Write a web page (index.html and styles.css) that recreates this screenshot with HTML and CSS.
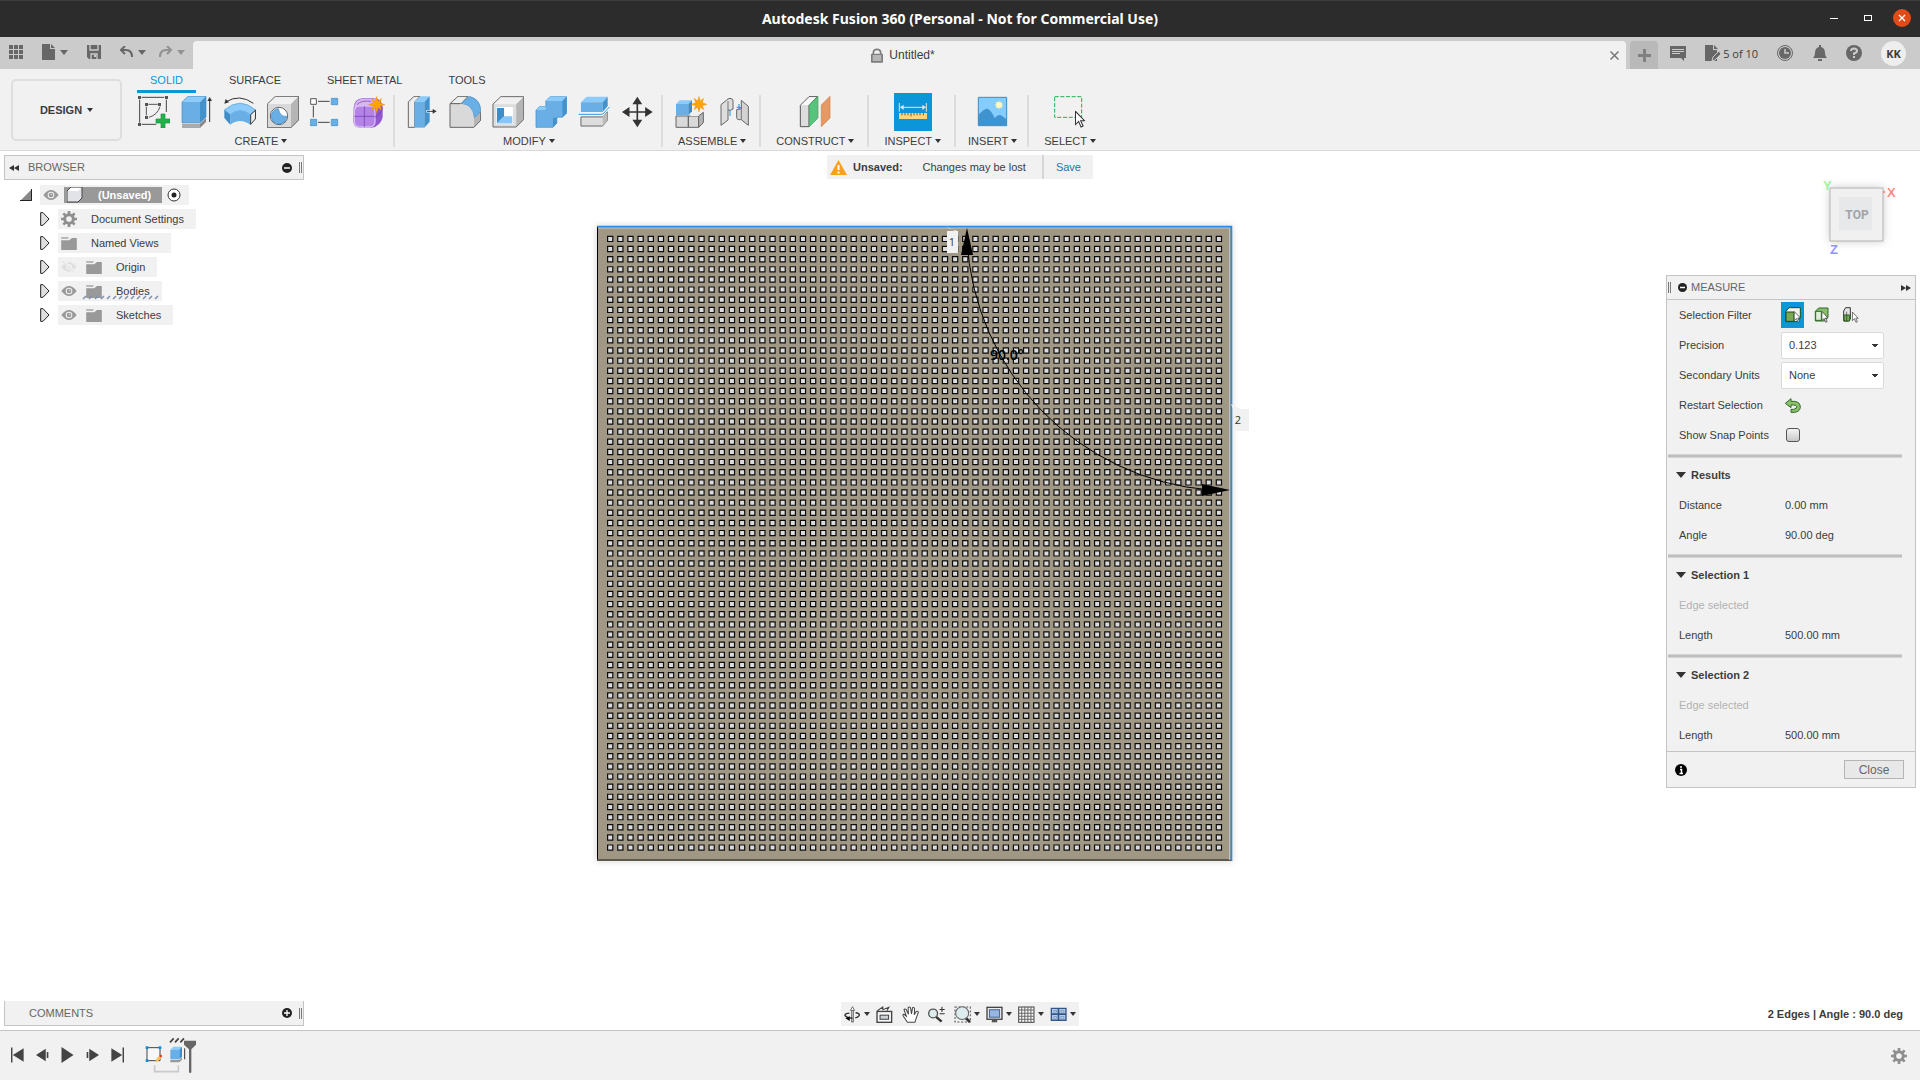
FILE: index.html
```html
<!DOCTYPE html>
<html lang="en">
<head>
  <meta charset="UTF-8">
  <meta name="viewport" content="width=device-width, initial-scale=1.0">
  <title>Autodesk Fusion 360 (Personal - Not for Commercial Use)</title>
  <link rel="stylesheet" href="styles.css">
</head>
<body>

<!-- shared shapes -->
<svg class="defs" aria-hidden="true">
  <defs>
    <symbol id="eye" viewBox="0 0 48 30">
      <path d="M1 15Q24-15 47 15Q24 45 1 15Z" fill="#9a9a9a"/>
      <circle cx="24" cy="15" r="10" fill="#f1f1f1"/>
      <circle cx="24" cy="15" r="7" fill="#9a9a9a"/>
      <circle cx="25" cy="13" r="2" fill="#f1f1f1"/>
    </symbol>
    <symbol id="eye-off" viewBox="0 0 48 36">
      <path d="M1 18Q24-10 47 18Q24 46 1 18Z" fill="#dedede"/>
      <circle cx="24" cy="18" r="9" fill="#f1f1f1"/>
      <circle cx="24" cy="18" r="6" fill="#dedede"/>
      <path d="M5 0L45 36" stroke="#f1f1f1" stroke-width="9"/>
      <path d="M5 2L43 36" stroke="#dedede" stroke-width="3"/>
    </symbol>
    <symbol id="folder" viewBox="0 0 48 40">
      <path d="M0 10H25L33 3H48V40H0Z" fill="#999"/>
      <path d="M0 3H22" stroke="#999" stroke-width="4"/>
    </symbol>
    <symbol id="gear" viewBox="0 0 48 48">
      <path d="M24 0V48M0 24H48M7 7L41 41M41 7L7 41" stroke="#8f8f8f" stroke-width="8"/>
      <circle cx="24" cy="24" r="13" fill="#f1f1f1" stroke="#8f8f8f" stroke-width="9"/>
    </symbol>
    <symbol id="twist" viewBox="0 0 30 42">
      <path d="M2 2H9L27 21L9 40H2Z" fill="#dfdfdf" stroke="#222" stroke-width="3"/>
    </symbol>
    <symbol id="cursor" viewBox="0 0 30 50">
      <path d="M2 2V40L11 31L18 47L24 44L17 29H28Z" fill="#fff" stroke="#333" stroke-width="3"/>
    </symbol>
    <symbol id="star" viewBox="0 0 48 48">
      <path d="M24 0L28 14L38 6L34 19L48 24L34 28L39 40L28 33L24 48L20 33L9 40L14 28L0 24L14 19L9 6L20 14Z" fill="#ffa400" stroke="#de8400"/>
    </symbol>
  </defs>
</svg>

<header class="titlebar">
  <h1>Autodesk Fusion 360 (Personal - Not for Commercial Use)</h1>
  <div class="window-buttons">
    <button aria-label="Minimize"><svg width="8" height="8"><path d="M0 4.500H8" stroke="#fff"/></svg></button>
    <button aria-label="Maximize"><svg width="8" height="8"><rect x=".5" y="1.500" width="7" height="5" fill="none" stroke="#fff"/></svg></button>
    <button class="win-close" aria-label="Close window"><svg width="8" height="8"><path d="M1 1L7 7M7 1L1 7" stroke="#fff" stroke-width="1.300"/></svg></button>
  </div>
</header>

<div class="tabbar">
  <div class="quick">
    <button aria-label="Data panel"><svg width="14" height="14" fill="#676767"><path d="M0 0h4v4H0zM5 0h4v4H5zM10 0h4v4h-4zM0 5h4v4H0zM5 5h4v4H5zM10 5h4v4h-4zM0 10h4v4H0zM5 10h4v4H5zM10 10h4v4h-4z"/></svg></button>
    <button class="caret" aria-label="File"><svg width="13" height="16" fill="#676767"><path d="M0 0H8V5H13V16H0ZM9 0L13 4H9Z"/></svg></button>
    <button aria-label="Save"><svg width="14" height="14"><path d="M0 0H14V14H2L0 12Z" fill="#676767"/><path d="M3 0V5H11V0M4 14V9H10V14" fill="none" stroke="#cbcbcb" stroke-width="1.300"/><path d="M8 10V12" stroke="#cbcbcb" stroke-width="2"/></svg></button>
    <div class="history">
      <button class="caret" aria-label="Undo"><svg width="13" height="12"><path d="M5 0L1 4L5 8M1 4H6Q12 4 12 11" fill="none" stroke="#676767" stroke-width="2"/></svg></button>
      <button class="caret dim" aria-label="Redo"><svg width="13" height="12"><path d="M8 0L12 4L8 8M12 4H7Q1 4 1 11" fill="none" stroke="#929292" stroke-width="2"/></svg></button>
    </div>
  </div>
  <div class="doc-tab">
    <span class="doc-name">
      <svg width="12" height="15" viewBox="0 0 36 43"><path d="M7 18V12Q8 3 18 3T29 12V18" fill="none" stroke="#7d7d7d" stroke-width="5"/><rect y="16" width="36" height="27" rx="2" fill="#7d7d7d"/><path d="M5 23H31M5 29H31M5 35H31" stroke="#f1f1f1" stroke-width="3"/></svg>
      Untitled*
    </span>
    <button aria-label="Close tab"><svg width="9" height="9"><path d="M.5 .5L8.500 8.500M8.500 .5L.5 8.500" stroke="#777" stroke-width="1.500"/></svg></button>
  </div>
  <button class="new-tab" aria-label="New tab"><svg width="13" height="13"><path d="M6.500 0V13M0 6.500H13" stroke="#808080" stroke-width="3"/></svg></button>
  <div class="account">
    <button aria-label="Comments"><svg width="16" height="16"><path d="M0 1H16V13H14V16L11 13H0Z" fill="#676767"/><path d="M2 4.500H14M2 6.500H14M2 8.500H10" stroke="#cbcbcb"/></svg></button>
    <button class="docs"><svg width="16" height="16"><path d="M0 0H8V5H12V16H0ZM9 0L13 4H9Z" fill="#676767"/><path d="M7 16L8 12L14 6L16 9L10 15Z" fill="#676767" stroke="#cbcbcb"/></svg>5 of 10</button>
    <button aria-label="Job status"><svg width="16" height="16"><circle cx="8" cy="8" r="7.500" fill="none" stroke="#676767"/><circle cx="8" cy="8" r="6" fill="#676767"/><path d="M8 4V8H12" fill="none" stroke="#cbcbcb" stroke-width="1.500"/></svg></button>
    <button aria-label="Notifications"><svg width="14" height="16" fill="#676767"><path d="M6 2V0H8V2Q12 3 12 8Q12 11 14 13H0Q2 11 2 8Q2 3 6 2ZM5 14H9V16H5Z"/></svg></button>
    <button aria-label="Help"><svg width="16" height="16"><circle cx="8" cy="8" r="8" fill="#676767"/><path d="M5 6Q5 3.500 8 3.500T11 6Q11 7.500 8 8.500V10" fill="none" stroke="#cbcbcb" stroke-width="2"/><path d="M7 11H9V13H7Z" fill="#cbcbcb"/></svg></button>
    <button class="avatar">KK</button>
  </div>
</div>

<section class="ribbon">
  <button class="workspace caret">DESIGN</button>
  <div class="ribbon-main">
    <nav class="ribbon-tabs">
      <a class="active" href="#solid">SOLID</a>
      <a href="#surface">SURFACE</a>
      <a href="#sheet">SHEET METAL</a>
      <a href="#tools">TOOLS</a>
    </nav>
    <div class="groups">
      <div class="group">
        <div class="tools">
          <button aria-label="Create sketch"><svg viewBox="411 198 96 96"><path d="M422 202H490M416 209V278M422 283H466M496 209V246" fill="none" stroke="#444" stroke-width="3"/><path d="M436 230V256M442 223H470M477 230Q470 254 444 262" fill="none" stroke="#555" stroke-width="3"/><path d="M411 198h9v9h-9zM492 198h9v9h-9zM411 279h9v9h-9zM432 219h9v9h-9zM471 219h9v9h-9zM432 258h9v9h-9z" fill="#555"/><path d="M480 252H492V267H507V279H492V294H480V279H465V267H480Z" fill="#22b24c" stroke="#12933a" stroke-width="2"/></svg></button>
          <button aria-label="Extrude"><svg viewBox="540 198 96 96"><path d="M543 281H597V294H543Z" fill="#aaa"/><path d="M597 281L615 264V276L597 294Z" fill="#888"/><path d="M543 216L561 199H615L597 216Z" fill="#8ccbfa"/><path d="M543 216H597V278H543Z" fill="#69afe5"/><path d="M597 216L615 199V261L597 278Z" fill="#4492cc"/><path d="M543 278V216L561 199H615V261L597 278Z" fill="none" stroke="#3d8bc5" stroke-width="2"/><path d="M626 276V210" stroke="#333" stroke-width="3"/><path d="M619 213L626 201L633 213Z" fill="#333"/></svg></button>
          <button aria-label="Revolve"><svg viewBox="669 198 96 96"><path d="M674 216Q716 190 757 220" fill="none" stroke="#333" stroke-width="3"/><path d="M670 221L674 207L684 217Z" fill="#333"/><path d="M670 240Q717 199 764 240L748 254Q716 230 688 254Z" fill="#8ccbfa" stroke="#4e9bd6" stroke-width="2"/><path d="M688 254Q716 230 748 254V284Q716 262 688 284Z" fill="#69afe5"/><path d="M670 240L688 254V284L670 264Z" fill="#3f8dc8"/><path d="M764 240L749 254V283L763 267Z" fill="#eee" stroke="#333" stroke-width="3"/></svg></button>
          <button aria-label="Hole"><svg viewBox="798 198 96 96"><path d="M799 222L823 199H893L870 222Z" fill="#f0f0f0"/><path d="M799 222H870V293H799Z" fill="#d9d9d9"/><path d="M870 222L893 199V270L870 293Z" fill="#b5b5b5"/><path d="M799 222L823 199H893V270L870 293H799Z" fill="none" stroke="#666" stroke-width="3"/><circle cx="834" cy="258" r="26" fill="#fff" stroke="#666" stroke-width="3"/><path d="M832 236A23 23 0 1 0 857 259Q837 261 832 236Z" fill="#69afe5" stroke="#3d8bc5" stroke-width="2"/></svg></button>
          <button aria-label="Pattern"><svg viewBox="927 198 96 96"><path d="M951 214H986M937 227V262M951 277H986" stroke="#444" stroke-width="3"/><path d="M929 206h17v17h-17z" fill="#fff" stroke="#555" stroke-width="3"/><path d="M991 205h19v19h-19zM928 268h19v19h-19zM991 268h19v19h-19z" fill="#69afe5" stroke="#3d8bc5" stroke-width="2"/></svg></button>
          <button aria-label="Create form"><svg viewBox="1056 198 96 96"><path d="M1058 232Q1060 206 1085 205H1120Q1146 208 1145 235V262Q1138 290 1112 293H1076Q1056 292 1057 270Z" fill="#9258cf"/><path d="M1060 229Q1064 207 1088 206H1128L1118 228Q1080 224 1060 240Z" fill="#d7b6f3"/><rect x="1060" y="228" width="62" height="63" rx="15" fill="#b384e6" stroke="#d8bdf3" stroke-width="4"/><path d="M1060 259H1122M1090 228V291M1122 262Q1140 252 1145 232M1068 224Q1080 210 1110 214" fill="none" stroke="#6d35a8" stroke-width="2"/><use href="#star" x="1102" y="199" width="50" height="50"/></svg></button>
        </div>
        <button class="group-label caret">CREATE</button>
      </div>
      <div class="group">
        <div class="tools">
          <button aria-label="Press pull"><svg viewBox="46 78 96 96"><path d="M53 96L70 79H88L72 96V172H53Z" fill="#eee" stroke="#666" stroke-width="3"/><path d="M71 96L89 79H117L101 96Z" fill="#8ccbfa"/><path d="M71 96H101V173H71Z" fill="#69afe5"/><path d="M101 96L117 79V155L101 173Z" fill="#4492cc"/><path d="M107 124H128" stroke="#fff" stroke-width="7"/><path d="M109 124H128" stroke="#333" stroke-width="3"/><path d="M126 117L138 124L126 131Z" fill="#333"/></svg></button>
          <button aria-label="Fillet"><svg viewBox="175 78 96 96"><path d="M178 101L202 79H232L212 101Z" fill="#eee" stroke="#666" stroke-width="3"/><path d="M178 101H212Q249 106 250 146V172H178Z" fill="#d9d9d9"/><path d="M250 145L271 123V151L250 172Z" fill="#b5b5b5"/><path d="M212 100L236 79Q271 88 270 125L251 143Q248 104 212 100Z" fill="#69afe5" stroke="#3d8bc5" stroke-width="2"/><path d="M178 101V172H250L270 151V127M178 101H209" fill="none" stroke="#666" stroke-width="3"/></svg></button>
          <button aria-label="Shell"><svg viewBox="304 78 98 96"><path d="M307 102L331 79H401L378 102Z" fill="#f0f0f0"/><path d="M307 102H378V172H307Z" fill="#ddd"/><path d="M378 102L401 79V149L378 172Z" fill="#b5b5b5"/><path d="M307 102L331 79H401V149L378 172H307Z" fill="none" stroke="#666" stroke-width="3"/><path d="M316 111H368V163H316Z" fill="#fff"/><path d="M319 114H341V139L319 161Z" fill="#3f8dc8"/><path d="M341 139H366V161H319Z" fill="#86c6f8"/></svg></button>
          <button aria-label="Combine"><svg viewBox="433 78 98 96"><path d="M436 120L447 109H466V92L479 79H530V129L517 142H500V160L488 173H436Z" fill="#69afe5" stroke="#3d8bc5" stroke-width="2"/><path d="M466 92L479 79H530L517 92ZM436 120L447 109H466V120Z" fill="#8ccbfa"/><path d="M517 92L530 79V129L517 142ZM488 145L500 142V160L488 173Z" fill="#4492cc"/></svg></button>
          <button aria-label="Split body"><svg viewBox="562 78 98 96"><path d="M571 96L588 79H653L638 96Z" fill="#8ccbfa"/><path d="M571 96H638V126H571Z" fill="#69afe5"/><path d="M638 96L653 79V108L638 126Z" fill="#4492cc"/><path d="M571 141H638L652 125V152L637 169H571Z" fill="#ddd" stroke="#666" stroke-width="3"/><path d="M638 141L652 125V152L638 168Z" fill="#bbb"/><path d="M564 133H637L659 110" fill="none" stroke="#fff" stroke-width="8"/><path d="M564 133H637L659 110" fill="none" stroke="#118ddd" stroke-width="3"/></svg></button>
          <button aria-label="Move"><svg viewBox="691 78 98 96"><path d="M741 98V154M713 126H769" stroke="#333" stroke-width="5"/><path d="M726 102L741 79L756 102ZM726 150L741 173L756 150ZM717 111L694 126L717 141ZM765 111L788 126L765 141Z" fill="#333"/></svg></button>
        </div>
        <button class="group-label caret">MODIFY</button>
      </div>
      <div class="group">
        <div class="tools">
          <button aria-label="New component"><svg viewBox="853 78 96 96"><path d="M856 138H893V172H856Z M893 138H924V172H893Z" fill="#d9d9d9" stroke="#666" stroke-width="3"/><path d="M898 138L910 127H938L924 138Z" fill="#f0f0f0"/><path d="M924 138L938 127V158L924 172Z" fill="#b5b5b5" stroke="#666" stroke-width="3"/><path d="M856 102L867 91H905L893 102Z" fill="#8ccbfa"/><path d="M856 102H893V136H856Z" fill="#69afe5"/><path d="M893 102L904 91V124L893 136Z" fill="#3f8dc8"/><use href="#star" x="901" y="79" width="48" height="48"/></svg></button>
          <button aria-label="Joint"><svg viewBox="982 78 96 96"><path d="M991 104L1007 91Q1012 85 1018 85Q1027 86 1027 92V117Q1021 123 1012 120V150L991 166Z" fill="#ddd" stroke="#666" stroke-width="3"/><path d="M1052 91L1073 109V166L1052 149Q1038 150 1038 143V119L1052 116Z" fill="#d3d3d3" stroke="#666" stroke-width="3"/><path d="M1012 93V120M1052 116V149" stroke="#777" stroke-width="3"/><path d="M1018 121V138M1045 102V118M1038 112H1051" stroke="#1591e5" stroke-width="3"/></svg></button>
        </div>
        <button class="group-label caret">ASSEMBLE</button>
      </div>
      <div class="group">
        <div class="tools">
          <button aria-label="Offset plane"><svg viewBox="60 288 96 96"><path d="M64 316L90 290H115L90 316V380H64Z" fill="#ddd" stroke="#555" stroke-width="3"/><path d="M67 315L91 292H111L89 315Z" fill="#fafafa"/><path d="M91 315L117 289V354L91 380Z" fill="#56c47a" stroke="#3aa660" stroke-width="2"/><path d="M127 315L153 289V354L127 380Z" fill="#e59a66" stroke="#cd7f48" stroke-width="2"/></svg></button>
        </div>
        <button class="group-label caret">CONSTRUCT</button>
      </div>
      <div class="group">
        <div class="tools">
          <button class="on" aria-label="Measure"><svg viewBox="351 288 96 96"><path d="M358 309V335M439 309V335M364 322H434" stroke="#e4e4e4" stroke-width="3"/><path d="M360 322L371 314V330ZM438 322L427 314V330Z" fill="#e4e4e4"/><path d="M357 339H441V357H357Z" fill="#ffd57c"/><path d="M366 339V346M375 339V346M384 339V346M393 339V349M402 339V346M411 339V346M420 339V346M430 339V346" stroke="#6b5a33" stroke-width="3"/></svg></button>
        </div>
        <button class="group-label caret">INSPECT</button>
      </div>
      <div class="group slim">
        <div class="tools">
          <button aria-label="Insert image"><svg viewBox="588 288 96 96"><path d="M592 292H677V377H592Z" fill="#85ccff" stroke="#3d8bc5" stroke-width="3"/><path d="M592 346Q608 325 619 326Q631 330 641 355Q653 342 660 346L677 358V377H592Z" fill="#3f93cf"/><circle cx="654" cy="315" r="10" fill="#fffbc9" stroke="#e3dfa0" stroke-width="2"/></svg></button>
        </div>
        <button class="group-label caret">INSERT</button>
      </div>
      <div class="group">
        <div class="tools">
          <button aria-label="Select"><svg viewBox="816 288 96 96"><path d="M818 290H899V352H818Z" fill="none" stroke="#20b050" stroke-width="3" stroke-dasharray="12 5"/><use href="#cursor" x="878" y="332" width="32" height="52"/></svg></button>
        </div>
        <button class="group-label caret">SELECT</button>
      </div>
    </div>
  </div>
</section>

<main class="canvas">
  <svg class="plate" viewBox="590 215 670 660" width="670" height="660">
    <defs>
      <filter id="shade" x="-5%" y="-5%" width="110%" height="110%"><feGaussianBlur stdDeviation="3"/></filter>
    </defs>
    <rect x="596" y="225" width="637" height="637" fill="#ddd" filter="url(#shade)"/>
    <rect x="597" y="226" width="635" height="635" fill="#a09885"/>
    <path id="holes" fill="#dcdcde" stroke="#0c0c0c" stroke-width="1.200"/>
    <path d="M597.500 227V860" stroke="#000"/>
    <path d="M597 860H1231" stroke="#5e584d" stroke-width="2"/>
    <path d="M598 228H1229.500V860" fill="none" stroke="#c3c0b7" stroke-width="1"/>
    <path d="M597 226.500H1231.500V861" fill="none" stroke="#2a89ec" stroke-width="1.600"/>
    <path d="M967 240A265 265 0 0 0 1210 490" fill="none" stroke="#000"/>
    <path d="M967 228L961 255H973ZM1230 490L1202 484V496Z"/>
    <path d="M945 226L955 231H947V253H958V231L950 229Z" fill="#f1f1f1"/>
    <path d="M1231 404L1241 409H1249V431H1233V409Z" fill="#f1f1f1"/>
    <text class="tag" x="952" y="246">1</text>
    <text class="tag" x="1238" y="424">2</text>
    <text class="angle" x="990" y="360">90.0°</text>
  </svg>

  <aside class="browser">
    <div class="dock-head">
      <svg width="10" height="6"><path d="M5 0V6L0 3ZM10 0V6L5 3Z" fill="#333"/></svg>
      <h2>BROWSER</h2>
      <button aria-label="Collapse"><svg width="10" height="10"><circle cx="5" cy="5" r="5" fill="#222"/><path d="M2 5H8" stroke="#fff" stroke-width="1.500"/></svg></button>
      <i class="grip"></i>
    </div>
    <ul class="tree">
      <li class="root">
        <svg class="twist" width="12" height="12"><path d="M12 0V12H0Z" fill="#888"/><path d="M11.500 0V11.500H0" fill="none" stroke="#222"/></svg>
        <div class="node">
          <svg width="16" height="10"><use href="#eye"/></svg>
          <span class="root-name"><svg width="16" height="16"><path d="M0 4L4 0H15V11L11 15H0Z" fill="#e1e3e8" stroke="#444"/><path d="M1 4L4 1H14L11 4Z" fill="#fff"/></svg>(Unsaved)</span>
          <svg width="14" height="14"><circle cx="7" cy="7" r="6" fill="#fff" stroke="#333"/><circle cx="7" cy="7" r="2.500" fill="#222"/></svg>
        </div>
      </li>
      <li><svg class="twist" width="10" height="14"><use href="#twist"/></svg><div class="node"><svg width="16" height="16"><use href="#gear"/></svg>Document Settings</div></li>
      <li><svg class="twist" width="10" height="14"><use href="#twist"/></svg><div class="node"><svg width="16" height="13"><use href="#folder"/></svg>Named Views</div></li>
      <li class="sub"><svg class="twist" width="10" height="14"><use href="#twist"/></svg><div class="node"><svg width="16" height="12"><use href="#eye-off"/></svg><svg width="16" height="13"><use href="#folder"/></svg>Origin</div></li>
      <li class="sub"><svg class="twist" width="10" height="14"><use href="#twist"/></svg><div class="node"><svg width="16" height="10"><use href="#eye"/></svg><svg width="16" height="13"><use href="#folder"/></svg>Bodies<svg class="hatch" width="78" height="5"><path d="M1 4L4 1M7 4L10 1M13 4L16 1M19 4L22 1M25 4L28 1M31 4L34 1M37 4L40 1M43 4L46 1M49 4L52 1M55 4L58 1M61 4L64 1M67 4L70 1M73 4L76 1" stroke="#7d8fb0" stroke-width="1.500"/></svg></div></li>
      <li class="sub"><svg class="twist" width="10" height="14"><use href="#twist"/></svg><div class="node"><svg width="16" height="10"><use href="#eye"/></svg><svg width="16" height="13"><use href="#folder"/></svg>Sketches</div></li>
    </ul>
  </aside>

  <div class="notice">
    <svg width="17" height="15"><path d="M8.500 0L17 15H0Z" fill="#fb9f1c"/><path d="M8.500 5V10M8.500 11.500V13.500" stroke="#fff" stroke-width="2"/></svg>
    <strong>Unsaved:</strong>
    <span>Changes may be lost</span>
    <a href="#save">Save</a>
  </div>

  <svg class="viewcube" width="84" height="84">
    <rect x="14" y="11" width="53" height="53" class="cube-face"/>
    <rect x="23" y="20" width="33" height="33" fill="#e6e8ea"/>
    <text x="41" y="42" class="cube-text">TOP</text>
    <text x="7" y="13" class="axis" fill="#9bf59b">Y</text>
    <text x="71" y="20" class="axis" fill="#ff8a8a">X</text>
    <text x="14" y="77" class="axis" fill="#9494ff">Z</text>
    <path d="M67 15H69" stroke="#ff8a8a" stroke-width="2"/>
  </svg>

  <aside class="measure">
    <div class="dock-head">
      <i class="grip"></i>
      <svg width="9" height="9"><circle cx="4.500" cy="4.500" r="4.500" fill="#222"/><path d="M2 4.500H7" stroke="#fff" stroke-width="1.500"/></svg>
      <h2>MEASURE</h2>
      <svg width="10" height="6"><path d="M0 0V6L5 3ZM5 0V6L10 3Z" fill="#333"/></svg>
    </div>
    <div class="row">
      <span>Selection Filter</span>
      <div class="filters">
        <button class="on" aria-label="Select face/edge/vertex"><svg width="16" height="16" viewBox="0 0 48 48"><path d="M2 14L12 2H46V32L36 44H2Z" fill="#eef3ee" stroke="#1e4f1e" stroke-width="3"/><path d="M3 15H27V43H3Z" fill="#78a957" stroke="#1e4f1e" stroke-width="3"/><use href="#cursor" x="26" y="12" width="22" height="36"/></svg></button>
        <button aria-label="Select body"><svg width="16" height="16" viewBox="0 0 48 48"><path d="M4 13L14 3H42V30L32 42H4Z" fill="#8bbd6f" stroke="#2b6b25" stroke-width="3"/><path d="M5 13H22V40H5Z" fill="#dfeed6" stroke="#2b6b25" stroke-width="3"/><use href="#cursor" x="22" y="12" width="22" height="36"/></svg></button>
        <button aria-label="Select component"><svg width="16" height="16" viewBox="0 0 48 48"><path d="M2 12L8 2H22V36L17 42H2Z" fill="#e5e5e5" stroke="#333" stroke-width="3"/><path d="M3 24H20V42H3Z" fill="#78a957" stroke="#2b5f25" stroke-width="3"/><path d="M11 14V42" stroke="#333" stroke-width="2"/><use href="#cursor" x="26" y="14" width="22" height="34"/></svg></button>
      </div>
    </div>
    <div class="row"><label for="precision">Precision</label><select id="precision"><option>0.123</option></select></div>
    <div class="row"><label for="units">Secondary Units</label><select id="units"><option>None</option></select></div>
    <div class="row"><span>Restart Selection</span><button class="restart" aria-label="Restart selection"><svg width="16" height="15" viewBox="0 0 48 45"><path d="M1 16L18 2V10H28Q46 12 46 28Q44 42 28 43H18V34H26Q36 32 35 26Q33 21 26 21H18V29Z" fill="#8cbf6b" stroke="#2b6b25" stroke-width="3"/></svg></button></div>
    <div class="row"><label for="snap">Show Snap Points</label><input type="checkbox" id="snap"></div>
    <hr>
    <h3>Results</h3>
    <div class="row"><span>Distance</span><span class="value">0.00 mm</span></div>
    <div class="row"><span>Angle</span><span class="value">90.00 deg</span></div>
    <hr>
    <h3>Selection 1</h3>
    <div class="row muted"><span>Edge selected</span></div>
    <div class="row"><span>Length</span><span class="value">500.00 mm</span></div>
    <hr>
    <h3>Selection 2</h3>
    <div class="row muted"><span>Edge selected</span></div>
    <div class="row"><span>Length</span><span class="value">500.00 mm</span></div>
    <div class="measure-foot">
      <svg width="12" height="12"><circle cx="6" cy="6" r="6"/><path d="M5 5.500H6.500V9M4.500 9.500H8M6 2V4" fill="none" stroke="#fff" stroke-width="1.500"/></svg>
      <button>Close</button>
    </div>
  </aside>

  <div class="comments dock-head">
    <h2>COMMENTS</h2>
    <button aria-label="Expand"><svg width="10" height="10"><circle cx="5" cy="5" r="5" fill="#222"/><path d="M2 5H8M5 2V8" stroke="#fff" stroke-width="1.300"/></svg></button>
    <i class="grip"></i>
  </div>

  <div class="navbar">
    <button class="caret" aria-label="Orbit"><svg viewBox="72 46 50 50"><path d="M97 94V58" stroke="#222" stroke-width="6"/><path d="M97 92V56" stroke="#fff" stroke-width="2"/><path d="M91 59L97 48L103 59Z" fill="#fff" stroke="#333" stroke-width="2"/><path d="M88 67Q74 68 75 74Q80 81 97 82M106 66Q118 67 117 73Q114 80 105 81" fill="none" stroke="#333" stroke-width="4"/><path d="M76 82L89 76V90Z"/></svg></button>
    <button aria-label="Look at"><svg viewBox="170 46 50 50"><path d="M174 60L190 49V57L208 50L202 60" fill="#fff" stroke="#444" stroke-width="3"/><rect x="173" y="62" width="43" height="32" fill="#f7f7f7" stroke="#444" stroke-width="4"/><rect x="182" y="73" width="25" height="12" fill="#cdd2d8" stroke="#444" stroke-width="3"/></svg></button>
    <button aria-label="Pan"><svg viewBox="248 46 50 50"><path d="M264 94L252 76Q249 71 253 70L261 76L254 57Q255 53 260 56L267 70L266 51Q270 47 273 51L276 69L279 51Q284 49 285 54L284 72L290 62Q296 60 296 65L289 84L286 94Z" fill="#fff" stroke="#444" stroke-width="3"/></svg></button>
    <button aria-label="Zoom"><svg viewBox="326 46 50 50"><path d="M349 77L366 92" stroke="#333" stroke-width="7"/><circle cx="341" cy="68" r="13" fill="#dcecee" stroke="#555" stroke-width="4"/><path d="M360 56H375M367 48V64M360 69H375" stroke="#333" stroke-width="3"/></svg></button>
    <button class="caret" aria-label="Zoom window"><svg viewBox="403 46 50 50"><path d="M406 49H451V93H406Z" fill="none" stroke="#555" stroke-width="3" stroke-dasharray="6 5"/><path d="M436 80L450 93" stroke="#333" stroke-width="8"/><circle cx="427" cy="67" r="19" fill="#dcecee" stroke="#666" stroke-width="3"/></svg></button>
    <button class="caret" aria-label="Display settings"><svg viewBox="503 46 50 50"><rect x="506" y="50" width="44" height="35" fill="#f5f5f5" stroke="#444" stroke-width="4"/><rect x="513" y="57" width="30" height="22" fill="#98b7e0" stroke="#42618f" stroke-width="3"/><path d="M520 87H536V94H520Z" fill="#555"/></svg></button>
    <button class="caret" aria-label="Grid and snaps"><svg viewBox="596 46 50 50"><rect x="598" y="49" width="45" height="45" fill="#fbfbfb" stroke="#444" stroke-width="3"/><path d="M607 49V94M616 49V94M625 49V94M634 49V94M598 58H643M598 67H643M598 76H643M598 85H643" stroke="#666" stroke-width="3"/></svg></button>
    <button class="caret" aria-label="Viewports"><svg viewBox="688 46 50 50"><path d="M692 53H735V88H692Z" fill="#b8cce8" stroke="#34578a" stroke-width="4"/><path d="M713 53V88M692 70H735" stroke="#34578a" stroke-width="5"/><path d="M699 59H707V64H699ZM720 59H729V64H720ZM699 77H707V82H699ZM720 77H729V82H720Z" fill="#dbe6f5" stroke="#6485b3" stroke-width="2"/></svg></button>
  </div>

  <p class="status">2 Edges | Angle : 90.0 deg</p>
</main>

<footer class="timeline">
  <div class="player">
    <button aria-label="Go to start"><svg viewBox="0 0 36 42"><path d="M0 0H4V42H0ZM35 2V40L5 21Z"/></svg></button>
    <button aria-label="Step back"><svg viewBox="0 0 40 42"><path d="M30 2V40L0 21ZM33 12H38V30H33Z"/></svg></button>
    <button aria-label="Play"><svg viewBox="0 0 36 48"><path d="M0 0V48L36 24Z"/></svg></button>
    <button aria-label="Step forward"><svg viewBox="0 0 40 42"><path d="M10 2V40L40 21ZM2 12H7V30H2Z"/></svg></button>
    <button aria-label="Go to end"><svg viewBox="0 0 36 42"><path d="M32 0H36V42H32ZM1 2V40L31 21Z"/></svg></button>
  </div>
  <svg class="features" width="54" height="38" viewBox="435 136 162 114">
    <path d="M441 171H480V210H441Z" fill="#f7f7f7" stroke="#444" stroke-width="3"/>
    <path d="M437 167h8v8h-8zM476 167h8v8h-8zM437 206h8v8h-8z" fill="#118ddd"/>
    <path d="M466 214L469 204L480 194L486 200L475 211Z" fill="#f8c04e"/>
    <circle cx="482" cy="196" r="4" fill="#e33"/>
    <path d="M464 224V243H535V224" fill="none" stroke="#c9c9c9" stroke-width="5"/>
    <path d="M511 208H538L546 200V207L538 215H511Z" fill="#999"/>
    <path d="M511 177L520 168H546L538 177Z" fill="#8ccbfa"/>
    <path d="M511 177H538V206H511Z" fill="#69afe5"/>
    <path d="M538 177L546 168V198L538 206Z" fill="#3f8dc8"/>
    <path d="M554 206V173" stroke="#333" stroke-width="3"/>
    <path d="M510 155L521 143M525 155L536 143M541 155L552 143" stroke="#444" stroke-width="5"/>
    <path d="M552 150H588V162L574 176V246H567V176L552 162Z" fill="#666"/>
  </svg>
  <button class="settings" aria-label="Settings"><svg width="16" height="16"><use href="#gear"/></svg></button>
</footer>

<script>
  // 61 x 61 square holes in the plate
  const count = 61;
  const pitch = 10.145;
  const size = 5.2;
  let d = '';

  for (let row = 0; row < count; row++) {
    for (let col = 0; col < count; col++) {
      const x = (610.2 + col * pitch - size / 2).toFixed(2);
      const y = (238.9 + row * pitch - size / 2).toFixed(2);
      d += `M${x} ${y}h${size}v${size}h-${size}z`;
    }
  }

  document.getElementById('holes').setAttribute('d', d);
</script>

</body>
</html>
```
FILE: styles.css
```css
* { box-sizing: border-box; }

body {
  font-family: "Liberation Sans", Arial, sans-serif;
  font-size: 11px;
  color: #3c3c3c;
  background: #fff;
  margin: 0;
  min-height: 100vh;
  display: flex;
  flex-direction: column;
}

h1, h2, h3, p, ul { margin: 0; padding: 0; }

button {
  font: inherit;
  color: inherit;
  background: none;
  border: none;
  padding: 0;
  display: flex;
  align-items: center;
  justify-content: center;
}

svg { flex-shrink: 0; display: block; }

a { text-decoration: none; color: inherit; }

.defs { position: absolute; width: 0; height: 0; }

.caret::after {
  content: "";
  border: 3px solid transparent;
  border-top: 4px solid #333;
  border-bottom: 0;
  margin-left: 3px;
}

/* title bar */
.titlebar {
  height: 37px;
  padding-bottom: 2px;
  background: #2c2c2c;
  border-top: 1px solid #3c3c3c;
  display: grid;
  grid-template-columns: 1fr auto 1fr;
  align-items: center;
}

.titlebar h1 {
  grid-column: 2;
  color: #fff;
  font-family: "Noto Sans", "Open Sans", sans-serif;
  font-size: 14px;
  font-weight: 700;
}

.window-buttons {
  display: flex;
  justify-content: flex-end;
  align-items: center;
  gap: 26px;
  padding-right: 9px;
}

.win-close {
  width: 18px;
  height: 18px;
  margin-left: -5px;
  border-radius: 50%;
  background: #e04b17;
}

/* document tabs */
.tabbar {
  height: 32px;
  background: #cbcbcb;
  display: flex;
  align-items: flex-end;
}

.quick {
  width: 193px;
  height: 32px;
  padding: 0 0 2px 9px;
  display: flex;
  align-items: center;
  gap: 19px;
}

.history { display: flex; gap: 13px; }

.quick .caret::after {
  border-width: 5px 4px 0;
  border-top-color: #676767;
  margin-left: 5px;
}

.quick .dim::after { border-top-color: #929292; }

.doc-tab {
  flex: 1;
  height: 28px;
  background: #f1f1f1;
  border-radius: 4px 4px 0 0;
  display: grid;
  grid-template-columns: 1fr auto 1fr;
  align-items: center;
  padding-right: 7px;
}

.doc-name {
  grid-column: 2;
  display: flex;
  align-items: center;
  gap: 6px;
  padding-right: 6px;
  font-size: 12px;
}

.doc-tab button { justify-self: end; }

.new-tab {
  width: 28px;
  height: 28px;
  margin-left: 4px;
  background: #b9b9b9;
  border-radius: 4px 4px 0 0;
}

.account {
  width: 262px;
  height: 32px;
  padding: 0 14px 0 12px;
  display: flex;
  align-items: center;
  justify-content: space-between;
  font-family: "Open Sans", "Noto Sans", sans-serif;
}

.docs { gap: 2px; }

.avatar {
  width: 25px;
  height: 25px;
  border-radius: 50%;
  background: #eee;
  font-weight: 700;
}

/* ribbon */
.ribbon {
  height: 82px;
  background: #f1f1f1;
  border-bottom: 1px solid #d9d9d9;
  display: flex;
}

.workspace {
  width: 111px;
  height: 62px;
  margin: 10px 5px 0 11px;
  border: 2px solid #dedede;
  border-radius: 5px;
  font-weight: 700;
}

.workspace::after { margin-left: 5px; }

.ribbon-tabs {
  display: flex;
  gap: 20px;
  height: 24px;
  padding-left: 10px;
}

.ribbon-tabs a {
  padding: 4px 13px 0;
  line-height: 14px;
}

.ribbon-tabs .active {
  color: #0a96d9;
  border-bottom: 3px solid #0a96d9;
}

.groups { display: flex; }

.group {
  height: 57px;
  padding: 0 5px;
  display: flex;
  flex-direction: column;
  align-items: center;
  background: linear-gradient(#dcdcdc, #dcdcdc) right 2px / 2px 52px no-repeat;
}

.group:last-child { background: none; }

.tools { display: flex; }

.tools button { width: 43px; height: 38px; }

.tools svg { width: 32px; height: 32px; }

.tools .on { width: 38px; background: #0a96d9; }

.group-label {
  flex-shrink: 0;
  height: 20px;
  padding: 0 10px;
}

.slim .group-label { padding: 0 7px; }

/* model view */
.canvas {
  flex: 1;
  position: relative;
  overflow: hidden;
}

.plate {
  position: absolute;
  top: 64px;
  left: calc(50% - 370px);
}

.tag {
  font-family: "Open Sans", sans-serif;
  font-size: 11px;
  text-anchor: middle;
  fill: #333;
}

.angle {
  font-family: "Open Sans", sans-serif;
  font-size: 14px;
  font-weight: 600;
}

.dock-head {
  height: 25px;
  background: #f1f1f1;
  border: 1px solid #c4c4c4;
  display: flex;
  align-items: center;
}

.dock-head h2 {
  flex: 1;
  font-size: 11px;
  font-weight: 400;
  color: #666;
}

.grip {
  width: 3px;
  height: 11px;
  border: 1px solid #777;
  border-width: 0 1px;
}

.browser {
  position: absolute;
  top: 4px;
  left: 4px;
  width: 300px;
}

.browser .dock-head, .comments { padding: 0 1px 0 4px; gap: 7px; }

.browser h2 { padding: 0 0 2px 2px; }

.tree { list-style: none; padding-top: 5px; }

.tree li {
  height: 20px;
  margin-bottom: 4px;
  padding-left: 36px;
  display: flex;
  align-items: center;
  gap: 8px;
}

.tree .root { padding-left: 16px; }

.node {
  position: relative;
  height: 20px;
  padding: 0 12px 0 3px;
  background: #f1f1f1;
  display: flex;
  align-items: center;
  gap: 14px;
}

.sub .node svg + svg { margin-left: -5px; }

.root .node { gap: 5px; padding-right: 8px; }

.root-name {
  width: 98px;
  height: 16px;
  padding-left: 3px;
  background: #999;
  color: #fff;
  font-weight: 700;
  display: flex;
  align-items: center;
  gap: 15px;
}

.sub .node .hatch {
  position: absolute;
  left: 24px;
  bottom: 1px;
  margin: 0;
}

.notice {
  position: absolute;
  top: 4px;
  left: 50%;
  transform: translateX(-50%);
  height: 24px;
  background: #f1f1f1;
  display: flex;
  align-items: center;
  padding-left: 3px;
  white-space: nowrap;
}

.notice strong { margin: 0 20px 0 6px; }

.notice a {
  height: 24px;
  line-height: 24px;
  margin-left: 16px;
  padding: 0 12px;
  border-left: 2px solid #d6d6d6;
  color: #1576b8;
}

.viewcube {
  position: absolute;
  top: 26px;
  right: 20px;
}

.cube-face {
  fill: #f0f0f0;
  stroke: #b5b5b5;
  filter: drop-shadow(0 0 4px #ccc);
}

.cube-text {
  font-family: Roboto, sans-serif;
  font-size: 12px;
  font-weight: 700;
  text-anchor: middle;
  fill: #a0a4a9;
}

.axis { font-size: 13px; font-weight: 700; }

/* measure panel */
.measure {
  position: absolute;
  top: 124px;
  right: 4px;
  width: 250px;
  background: #f1f1f1;
  border: 1px solid #c4c4c4;
}

.measure .dock-head {
  height: 24px;
  border-width: 0 0 1px;
  padding: 0 4px 0 1px;
}

.measure .grip { margin-right: 7px; }

.measure h2 { padding: 0 0 2px 4px; }

.row {
  display: grid;
  grid-template-columns: 102px 1fr;
  align-items: center;
  height: 30px;
  padding-left: 12px;
}

.value { padding-left: 4px; }

.muted { color: #b2b2b2; }

.filters { display: flex; gap: 6px; }

.filters button { width: 23px; height: 26px; }

.filters .on { background: #0a96d9; }

.row select {
  appearance: none;
  width: 103px;
  height: 27px;
  padding: 0 7px;
  border: 1px solid #dadada;
  border-radius: 2px;
  color: inherit;
  font: inherit;
  background:
    linear-gradient(to bottom right, #333 50%, transparent 50%) 93px 11px / 3px 4px no-repeat,
    linear-gradient(to bottom left, #333 50%, transparent 50%) 90px 11px / 3px 4px no-repeat,
    #fff;
}

.restart { width: 24px; height: 24px; }

.row input {
  appearance: none;
  width: 14px;
  height: 14px;
  margin: 0 5px;
  border: 1px solid #555;
  border-radius: 3px;
  background: linear-gradient(#f4f4f4, #c8c8c8);
}

.measure hr {
  height: 4px;
  margin: 4px 13px 2px 1px;
  border: 1px solid #d4d4d4;
  border-width: 1px 0;
  background: #bfbfbf;
}

.measure h3 {
  height: 30px;
  padding-left: 9px;
  display: flex;
  align-items: center;
  gap: 5px;
  font-size: 11px;
}

.measure h3::before {
  content: "";
  border: 5px solid transparent;
  border-top: 6px solid #333;
  border-bottom: 0;
}

.measure-foot {
  height: 36px;
  margin-top: 1px;
  padding: 0 11px 0 8px;
  border-top: 1px solid #c4c4c4;
  display: flex;
  align-items: center;
  justify-content: space-between;
}

.measure-foot button {
  width: 60px;
  height: 19px;
  border: 1px solid #b5b5b5;
  background: #e8e8e8;
  color: #666;
  font-size: 12px;
}

/* bottom overlays */
.comments {
  position: absolute;
  left: 4px;
  bottom: 4px;
  width: 300px;
  border-top: none;
}

.comments h2 { padding-left: 20px; }

.navbar {
  position: absolute;
  left: 50%;
  bottom: 4px;
  transform: translateX(-50%);
  height: 24px;
  padding: 0 6px 0 3px;
  background: #f1f1f1;
  display: flex;
  gap: 9px;
}

.navbar svg { width: 17px; height: 17px; }

.navbar .caret { margin-right: -3px; }

.status {
  position: absolute;
  right: 17px;
  bottom: 9px;
  line-height: 14px;
  font-weight: 700;
}

/* timeline */
.timeline {
  height: 50px;
  background: #f1f1f1;
  border-top: 1px solid #c4c4c4;
  display: flex;
  align-items: center;
  padding: 0 13px 0 11px;
}

.player {
  display: flex;
  gap: 12px;
  margin-bottom: 2px;
}

.player svg { width: 13px; height: 16px; fill: #444; }

.features { margin: 0 0 2px 21px; }

.settings { margin-left: auto; }
```
